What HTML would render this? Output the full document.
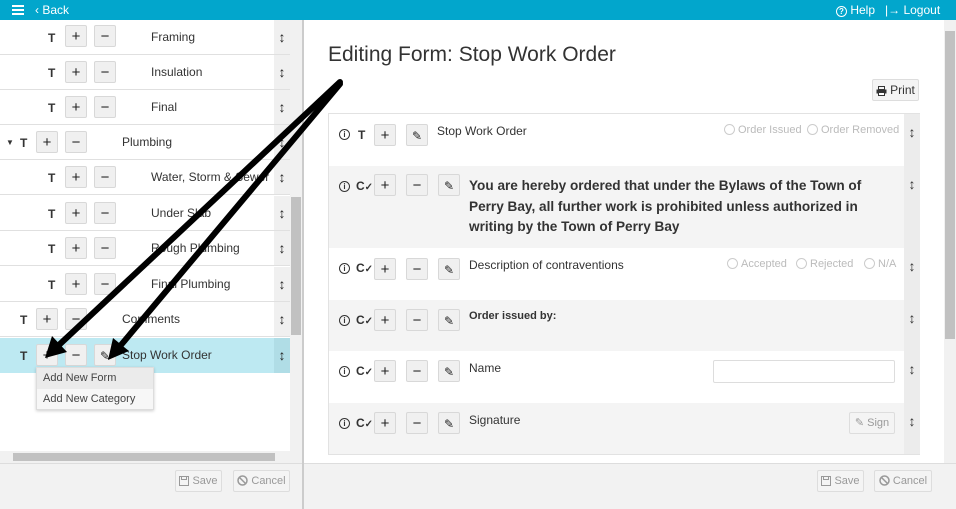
<!DOCTYPE html>
<html><head><style>
*{box-sizing:border-box;margin:0;padding:0}
body{width:956px;height:509px;overflow:hidden;font-family:"Liberation Sans",sans-serif;background:#fff;position:relative;color:#333;font-size:12px}
.hdr{position:absolute;left:0;top:0;width:956px;height:20px;background:#02a6cc;color:#fff}
.abs{position:absolute}
.btn{position:absolute;width:22px;height:22px;background:#f0f0f0;border:1px solid #d8d8d8;border-radius:2px;text-align:center;line-height:22px;font-size:15px;color:#222}
.row{position:absolute;left:0;width:290px;height:35px;border-bottom:1px solid #e0e0e0}
.row .T{position:absolute;top:11px;font-weight:bold;font-size:12px}
.row .lbl{position:absolute;top:10px;font-size:12px;color:#333}
.mv{position:absolute;right:0;top:0;width:16px;height:100%;background:#f0f0f0;text-align:center;font-size:14px;font-weight:bold;line-height:34px;color:#222}
.frow{position:absolute;left:329px;width:591px}
.frow .mv2{position:absolute;right:0;top:0;width:16px;height:100%;background:#ececec;text-align:center;font-weight:bold;font-size:14px;padding-top:10px}
.info{position:absolute;width:11px;height:11px;border:1px solid #333;border-radius:50%;font-size:8px;text-align:center;line-height:9px;font-weight:bold}
.fbtn{position:absolute;height:22px;background:#f4f4f4;border:1px solid #ddd;border-radius:2px;color:#999;font-size:11px;line-height:20px;padding:0;text-align:center;white-space:nowrap}
.radio{color:#bbb;font-size:11px;position:absolute}
.radio span{display:inline-block;width:11px;height:11px;border:1px solid #ccc;border-radius:50%;vertical-align:-2px;margin-right:3px}
.ic{display:inline-block;vertical-align:-2px;margin-right:3px}
</style></head><body>
<div class="hdr">
 <div class="abs" style="left:12px;top:5px;width:12px;height:2px;background:#fff;box-shadow:0 4px 0 #fff,0 8px 0 #fff"></div>
 <div class="abs" style="left:35px;top:3px;font-size:12px">‹ Back</div>
 <div class="abs" style="left:836px;top:3px;font-size:12px"><span style="display:inline-block;width:11px;height:11px;border:1.5px solid #fff;border-radius:50%;font-size:8px;text-align:center;line-height:9px;font-weight:bold">?</span> Help</div>
 <div class="abs" style="left:885px;top:3px;font-size:12px">|→ Logout</div>
</div>

<div class="row" style="top:20px"><span class="T" style="left:48px">T</span><div class="btn" style="left:65px;top:5px">+</div><div class="btn" style="left:94px;top:5px">−</div><span class="lbl" style="left:151px">Framing</span><div class="mv">↕</div></div>
<div class="row" style="top:55px"><span class="T" style="left:48px">T</span><div class="btn" style="left:65px;top:6px">+</div><div class="btn" style="left:94px;top:6px">−</div><span class="lbl" style="left:151px">Insulation</span><div class="mv">↕</div></div>
<div class="row" style="top:90px"><span class="T" style="left:48px">T</span><div class="btn" style="left:65px;top:6px">+</div><div class="btn" style="left:94px;top:6px">−</div><span class="lbl" style="left:151px">Final</span><div class="mv">↕</div></div>
<div class="row" style="top:125px"><span class="T" style="left:6px;font-size:8px;top:13px">▼</span><span class="T" style="left:20px">T</span><div class="btn" style="left:36px;top:6px">+</div><div class="btn" style="left:65px;top:6px">−</div><span class="lbl" style="left:122px">Plumbing</span><div class="mv">↕</div></div>
<div class="row" style="top:160px"><span class="T" style="left:48px">T</span><div class="btn" style="left:65px;top:6px">+</div><div class="btn" style="left:94px;top:6px">−</div><span class="lbl" style="left:151px">Water, Storm &amp; Sewer</span><div class="mv">↕</div></div>
<div class="row" style="top:196px"><span class="T" style="left:48px">T</span><div class="btn" style="left:65px;top:6px">+</div><div class="btn" style="left:94px;top:6px">−</div><span class="lbl" style="left:151px">Under Slab</span><div class="mv">↕</div></div>
<div class="row" style="top:231px"><span class="T" style="left:48px">T</span><div class="btn" style="left:65px;top:6px">+</div><div class="btn" style="left:94px;top:6px">−</div><span class="lbl" style="left:151px">Rough Plumbing</span><div class="mv">↕</div></div>
<div class="row" style="top:267px"><span class="T" style="left:48px">T</span><div class="btn" style="left:65px;top:6px">+</div><div class="btn" style="left:94px;top:6px">−</div><span class="lbl" style="left:151px">Final Plumbing</span><div class="mv">↕</div></div>
<div class="row" style="top:302px"><span class="T" style="left:20px">T</span><div class="btn" style="left:36px;top:6px">+</div><div class="btn" style="left:65px;top:6px">−</div><span class="lbl" style="left:122px">Comments</span><div class="mv">↕</div></div>
<div class="row" style="top:338px;background:#bde9f2;border:none"><span class="T" style="left:20px">T</span><div class="btn" style="left:36px;top:6px">+</div><div class="btn" style="left:65px;top:6px">−</div><div class="btn" style="left:94px;top:6px;font-size:12px">✎</div><span class="lbl" style="left:122px">Stop Work Order</span><div class="mv" style="background:#b0dde6">↕</div></div>
<div class="abs" style="left:36px;top:367px;width:118px;height:43px;background:#f7f7f7;border:1px solid #ddd;box-shadow:0 1px 3px rgba(0,0,0,.2);font-size:11px;color:#444">
 <div style="height:21px;background:#ebebeb;padding:4px 6px">Add New Form</div>
 <div style="padding:4px 6px">Add New Category</div>
</div>
<div class="abs" style="left:290px;top:20px;width:12px;height:431px;background:#f1f1f1"></div>
<div class="abs" style="left:291px;top:197px;width:10px;height:138px;background:#c1c1c1"></div>
<div class="abs" style="left:0;top:451px;width:302px;height:12px;background:#f1f1f1"></div>
<div class="abs" style="left:13px;top:453px;width:262px;height:8px;background:#c1c1c1"></div>
<div class="abs" style="left:0;top:463px;width:302px;height:46px;background:#f2f2f2;border-top:1px solid #ddd"></div>
<div class="fbtn" style="left:175px;top:470px;width:47px"><svg class="ic" width="10" height="10"><rect x=".5" y=".5" width="9" height="9" fill="none" stroke="#999"/><rect x="2.5" y=".5" width="5" height="3" fill="none" stroke="#999"/></svg>Save</div>
<div class="fbtn" style="left:233px;top:470px;width:57px"><svg class="ic" width="11" height="11"><circle cx="5.5" cy="5.5" r="4.5" fill="none" stroke="#999" stroke-width="1.5"/><line x1="2.5" y1="2.5" x2="8.5" y2="8.5" stroke="#999" stroke-width="1.5"/></svg>Cancel</div>
<div class="abs" style="left:302px;top:20px;width:2px;height:489px;background:#ccc"></div>

<div class="abs" style="left:328px;top:43px;font-size:21px;color:#333">Editing Form: Stop Work Order</div>
<div class="fbtn" style="left:872px;top:79px;color:#333;font-size:12px;width:47px"><svg class="ic" width="11" height="10"><rect x="2.5" y=".5" width="6" height="3" fill="none" stroke="#333"/><rect x=".5" y="3.5" width="10" height="4" fill="#333"/><rect x="2.5" y="6.5" width="6" height="3" fill="#fff" stroke="#333"/></svg>Print</div>
<div class="abs" style="left:328px;top:113px;width:592px;height:342px;border:1px solid #e2e2e2"></div>

<div class="frow" style="top:114px;height:52px;background:#fff">
 <div class="info" style="left:10px;top:15px">i</div><span class="abs" style="left:29px;top:14px;font-weight:bold">T</span>
 <div class="btn" style="left:45px;top:10px">+</div><div class="btn" style="left:77px;top:10px;font-size:12px">✎</div>
 <span class="abs" style="left:108px;top:10px;font-size:12px">Stop Work Order</span>
 <div class="radio" style="left:395px;top:10px"><span></span>Order Issued</div>
 <div class="radio" style="left:478px;top:10px"><span></span>Order Removed</div>
 <div class="mv2">↕</div></div>
<div class="frow" style="top:166px;height:82px;background:#f4f4f4">
 <div class="info" style="left:10px;top:15px">i</div><span class="abs" style="left:27px;top:13px;font-weight:bold">C<small>✓</small></span>
 <div class="btn" style="left:45px;top:8px">+</div><div class="btn" style="left:77px;top:8px">−</div><div class="btn" style="left:109px;top:8px;font-size:12px">✎</div>
 <div class="abs" style="left:140px;top:10px;width:400px;font-size:13.6px;font-weight:bold;line-height:20.5px;color:#333">You are hereby ordered that under the Bylaws of the Town of Perry Bay, all further work is prohibited unless authorized in writing by the Town of Perry Bay</div>
 <div class="mv2">↕</div></div>
<div class="frow" style="top:248px;height:52px;background:#fff">
 <div class="info" style="left:10px;top:15px">i</div><span class="abs" style="left:27px;top:13px;font-weight:bold">C<small>✓</small></span>
 <div class="btn" style="left:45px;top:10px">+</div><div class="btn" style="left:77px;top:10px">−</div><div class="btn" style="left:109px;top:10px;font-size:12px">✎</div>
 <span class="abs" style="left:140px;top:10px">Description of contraventions</span>
 <div class="radio" style="left:398px;top:10px"><span></span>Accepted</div>
 <div class="radio" style="left:467px;top:10px"><span></span>Rejected</div>
 <div class="radio" style="left:535px;top:10px"><span></span>N/A</div>
 <div class="mv2">↕</div></div>
<div class="frow" style="top:300px;height:51px;background:#f4f4f4">
 <div class="info" style="left:10px;top:15px">i</div><span class="abs" style="left:27px;top:13px;font-weight:bold">C<small>✓</small></span>
 <div class="btn" style="left:45px;top:9px">+</div><div class="btn" style="left:77px;top:9px">−</div><div class="btn" style="left:109px;top:9px;font-size:12px">✎</div>
 <span class="abs" style="left:140px;top:10px;font-weight:bold;font-size:11px">Order issued by:</span>
 <div class="mv2">↕</div></div>
<div class="frow" style="top:351px;height:52px;background:#fff">
 <div class="info" style="left:10px;top:15px">i</div><span class="abs" style="left:27px;top:13px;font-weight:bold">C<small>✓</small></span>
 <div class="btn" style="left:45px;top:9px">+</div><div class="btn" style="left:77px;top:9px">−</div><div class="btn" style="left:109px;top:9px;font-size:12px">✎</div>
 <span class="abs" style="left:140px;top:10px">Name</span>
 <div class="abs" style="left:384px;top:9px;width:182px;height:23px;border:1px solid #ddd;border-radius:2px"></div>
 <div class="mv2">↕</div></div>
<div class="frow" style="top:403px;height:51px;background:#f4f4f4">
 <div class="info" style="left:10px;top:15px">i</div><span class="abs" style="left:27px;top:13px;font-weight:bold">C<small>✓</small></span>
 <div class="btn" style="left:45px;top:9px">+</div><div class="btn" style="left:77px;top:9px">−</div><div class="btn" style="left:109px;top:9px;font-size:12px">✎</div>
 <span class="abs" style="left:140px;top:10px">Signature</span>
 <div class="fbtn" style="left:520px;top:9px;color:#999;width:46px">✎ Sign</div>
 <div class="mv2">↕</div></div>

<div class="abs" style="left:944px;top:20px;width:12px;height:443px;background:#f1f1f1"></div>
<div class="abs" style="left:945px;top:31px;width:10px;height:308px;background:#c1c1c1"></div>
<div class="abs" style="left:304px;top:463px;width:652px;height:46px;background:#f2f2f2;border-top:1px solid #ddd"></div>
<div class="fbtn" style="left:817px;top:470px;width:47px"><svg class="ic" width="10" height="10"><rect x=".5" y=".5" width="9" height="9" fill="none" stroke="#999"/><rect x="2.5" y=".5" width="5" height="3" fill="none" stroke="#999"/></svg>Save</div>
<div class="fbtn" style="left:874px;top:470px;width:58px"><svg class="ic" width="11" height="11"><circle cx="5.5" cy="5.5" r="4.5" fill="none" stroke="#999" stroke-width="1.5"/><line x1="2.5" y1="2.5" x2="8.5" y2="8.5" stroke="#999" stroke-width="1.5"/></svg>Cancel</div>

<svg class="abs" style="left:0;top:0" width="956" height="509">
 <line x1="340" y1="82" x2="60" y2="344" stroke="#000" stroke-width="6" stroke-linecap="round"/>
 <polygon points="45,358 67,352 52,336" fill="#000"/>
 <line x1="340" y1="84" x2="121" y2="345" stroke="#000" stroke-width="6" stroke-linecap="round"/>
 <polygon points="108,360 129,351 113,338" fill="#000"/>
</svg>
</body></html>
